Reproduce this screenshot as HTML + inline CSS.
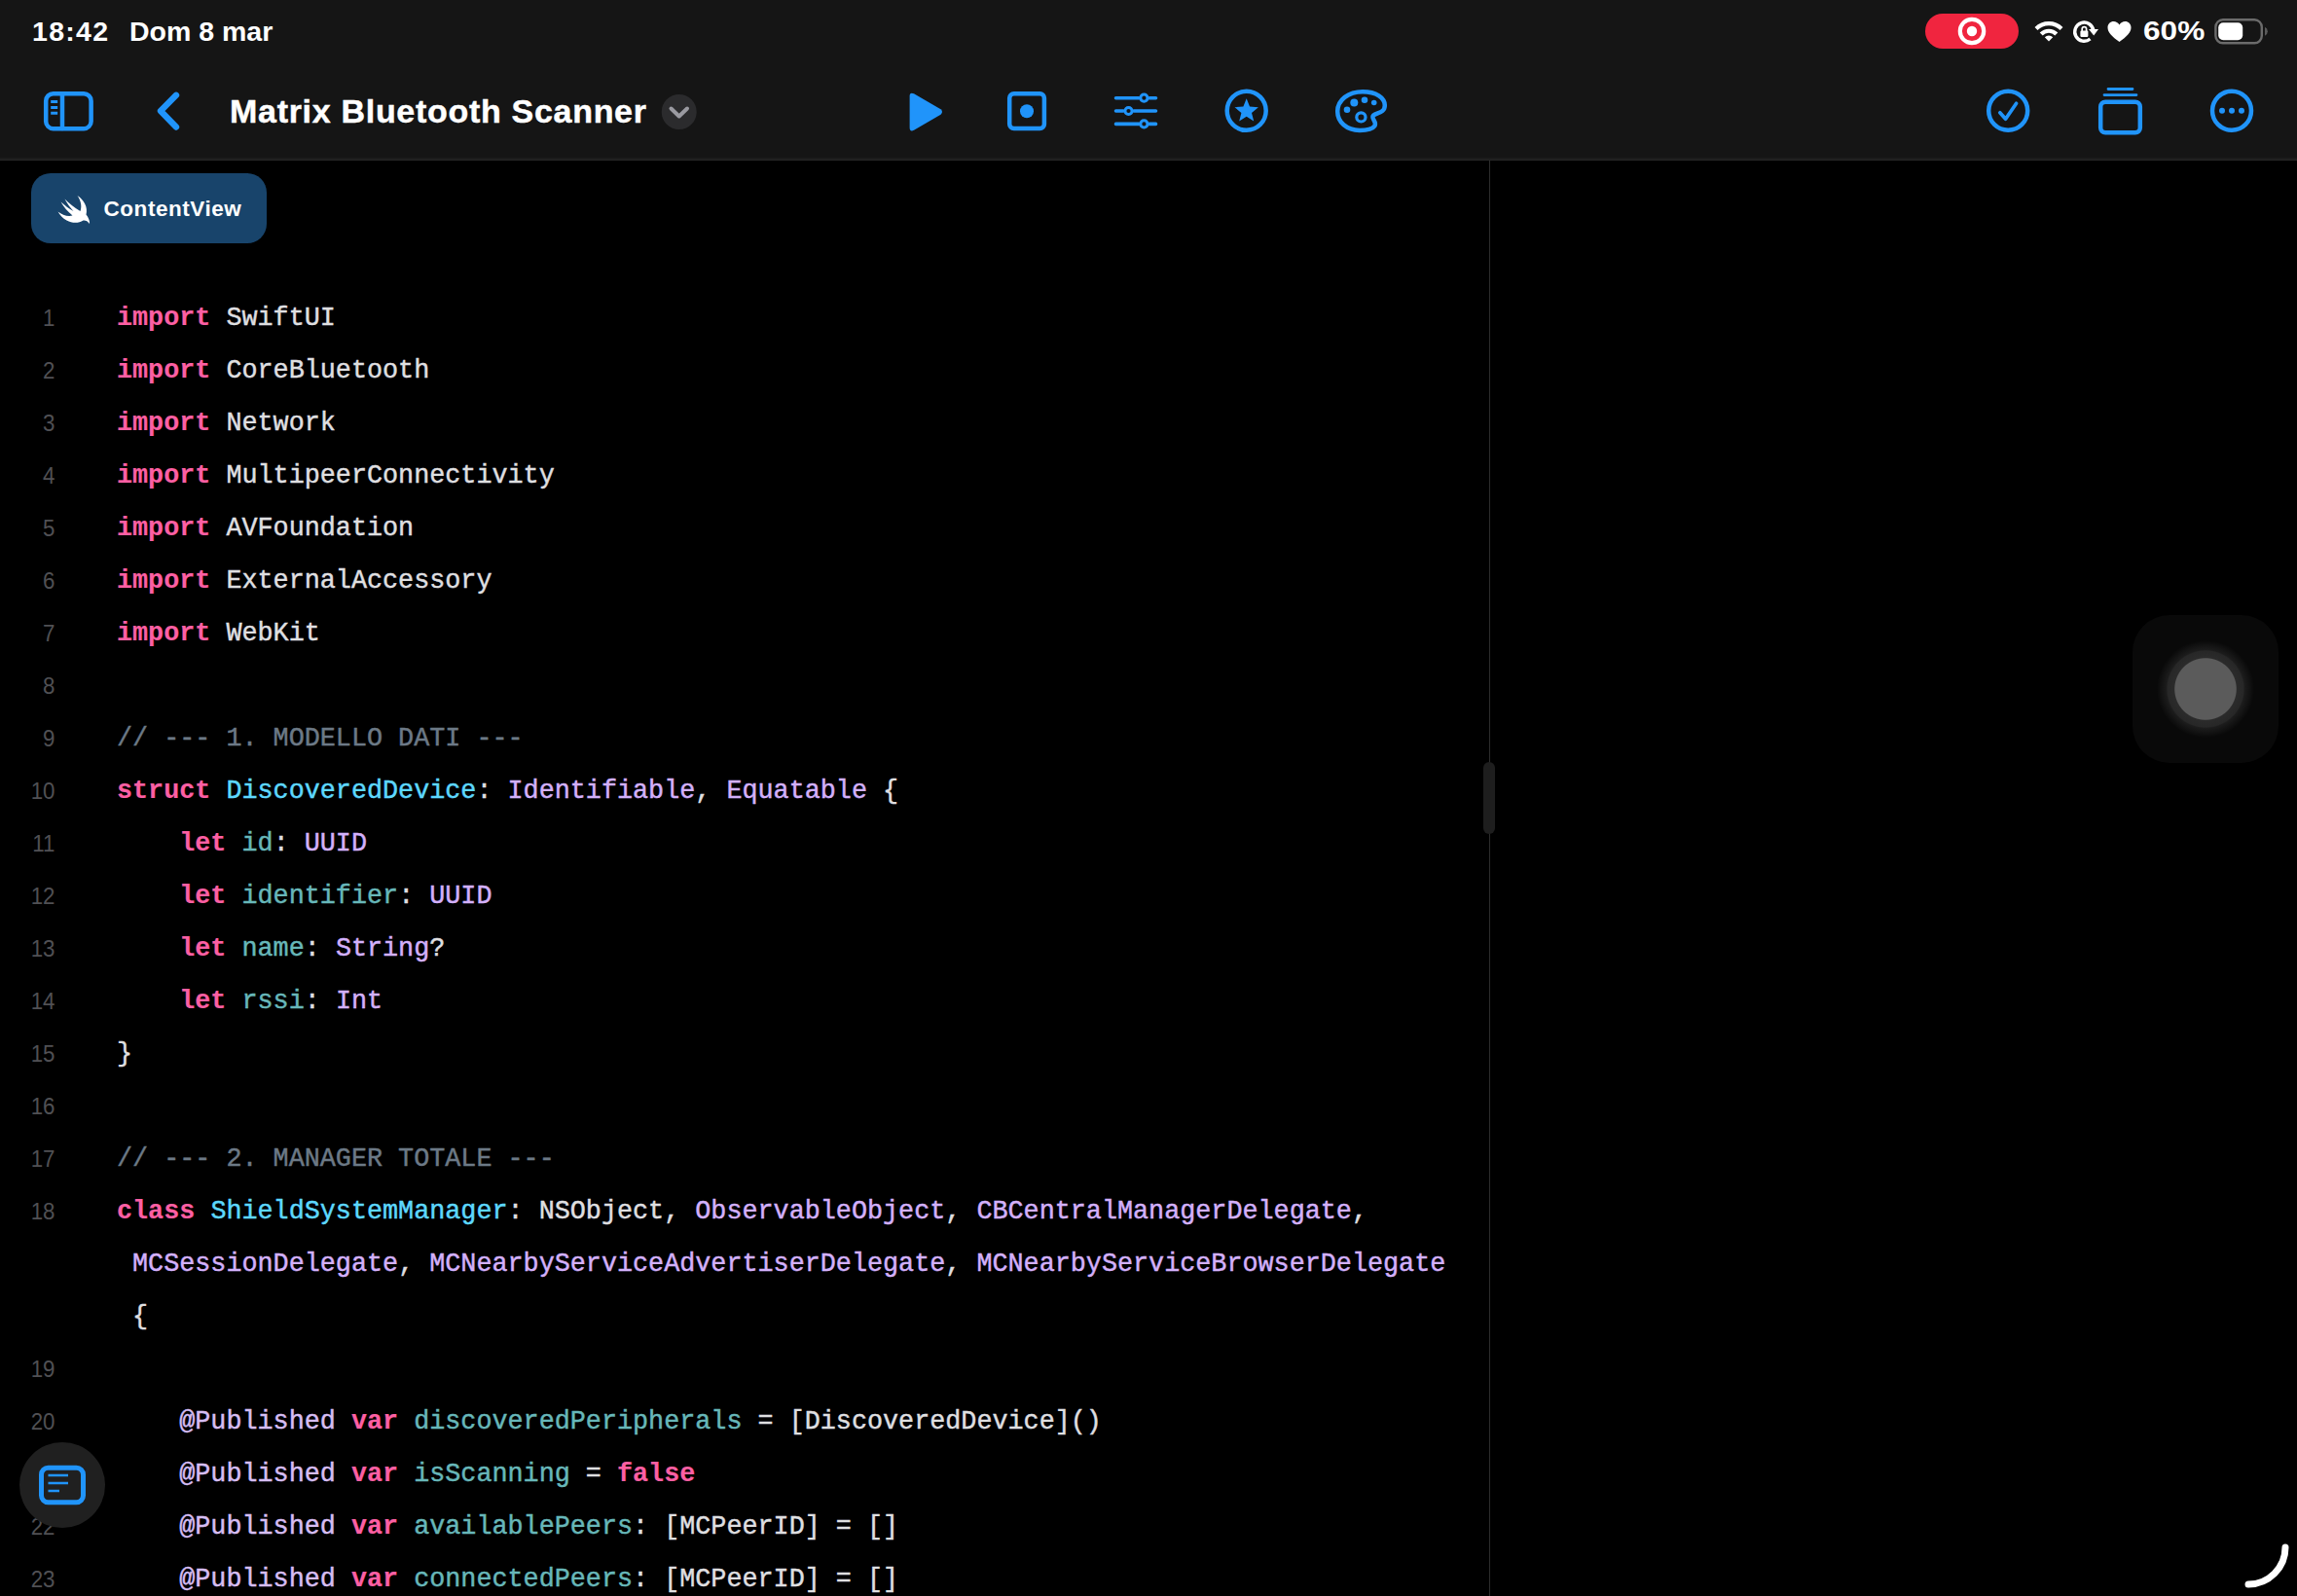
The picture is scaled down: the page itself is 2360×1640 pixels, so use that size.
<!DOCTYPE html>
<html lang="it">
<head>
<meta charset="utf-8">
<title>Matrix Bluetooth Scanner</title>
<style>
*{box-sizing:border-box;margin:0;padding:0}
html,body{width:2360px;height:1640px;overflow:hidden;background:#000}
body{position:relative;font-family:"Liberation Sans",sans-serif;color:#fff}
.abs{position:absolute}
#bar{left:0;top:0;width:2360px;height:165px;background:linear-gradient(#151515 0,#151515 162px,#1c1c1c 162px,#1c1c1c 164px,#272727 164px,#272727 165px)}
.st{position:absolute;font-weight:700;font-size:28.5px;line-height:32px;top:16px;color:#fff;white-space:nowrap}
#title{left:236px;top:92px;font-weight:700;font-size:34px;line-height:44px;letter-spacing:.7px;white-space:nowrap;-webkit-text-stroke:.45px #fff}
svg{position:absolute;overflow:visible}
.bl{stroke:#2094fa;fill:none;stroke-width:4.5;stroke-linecap:round;stroke-linejoin:round}
.bf{fill:#2094fa;stroke:none}
#tab{left:32px;top:178px;width:242px;height:72px;border-radius:20px;background:#18446b}
#tab span{position:absolute;left:74.500px;top:23px;font-weight:700;font-size:22.500px;line-height:28px;letter-spacing:.55px;white-space:nowrap}
#code{left:0;top:299.500px;width:1530px}
.ln{position:relative;height:54px;white-space:pre;font-family:"Liberation Mono",monospace;font-size:26.78px;line-height:54px;color:#dfdfe0;padding-left:120px;-webkit-text-stroke:.45px currentColor}
.ln i{position:absolute;left:0;top:.5px;width:56.500px;text-align:right;font-style:normal;font-family:"Liberation Sans",sans-serif;font-size:24.500px;color:#505054;line-height:54px;-webkit-text-stroke:0;transform:scaleX(.91);transform-origin:100% 50%}
.k{color:#fc5fa3;font-weight:700;-webkit-text-stroke:.15px currentColor}
.t{color:#5dd8ff}
.p{color:#d3b0fb}
.a{color:#d6bdf3}
.v{color:#67b7b9}
.c{color:#6c7986}
#div{left:1530px;top:165px;width:1px;height:1475px;background:#2c2c2c}
#grip{left:1524px;top:783px;width:12px;height:74px;border-radius:6px;background:#1e1e1e}
#fab{left:20px;top:1482px;width:88px;height:88px;border-radius:44px;background:#202020}
#at{left:2191px;top:632px;width:150px;height:152px;border-radius:38px;background:#090909}
#at b{position:absolute;border-radius:50%}
</style>
</head>
<body>
<div id="bar" class="abs"></div>
<div class="st" style="left:33px;letter-spacing:1.300px">18:42</div>
<div class="st" style="left:133px">Dom 8 mar</div>
<div class="st" style="left:2201.500px;font-size:27px;transform-origin:0 50%;transform:scaleX(1.17)">60%</div>
<div id="title" class="abs">Matrix Bluetooth Scanner</div>

<!-- status icons -->
<svg id="stat" width="2360" height="64" style="left:0;top:0">
<rect x="1978" y="14" width="96" height="36" rx="18" fill="#f0253f"/>
<circle cx="2026" cy="32" r="12.2" fill="none" stroke="#fff" stroke-width="4.2"/>
<circle cx="2026" cy="32" r="5.2" fill="#fff"/>
<!-- wifi -->
<g fill="none" stroke="#fff" stroke-width="4.2" stroke-linecap="butt">
<path d="M2092 29.5 A18.5 18.5 0 0 1 2118 29.5"/>
<path d="M2097.2 35 A11 11 0 0 1 2112.8 35"/>
</g>
<path d="M2105 42.5 L2100.8 38.2 A6 6 0 0 1 2109.2 38.2 Z" fill="#fff"/>
<!-- rotation lock -->
<path d="M2147.470 40.050 A9.600 9.600 0 1 1 2150.810 31.360" fill="none" stroke="#fff" stroke-width="3.400"/>
<path d="M2146 30 L2156 30 L2151.200 36.600 Z" fill="#fff"/>
<rect x="2137.400" y="31.600" width="8" height="6.400" rx="1.200" fill="#fff"/>
<path d="M2139.200 32 v-2.200 a2.200 2.200 0 0 1 4.400 0 v2.200" fill="none" stroke="#fff" stroke-width="1.700"/>
<!-- heart -->
<path d="M2177.5 43 C2170 37.5 2165.5 33.5 2165.5 28.2 C2165.5 24.6 2168.3 22 2171.6 22 C2174 22 2176.2 23.3 2177.5 25.4 C2178.800 23.3 2181 22 2183.4 22 C2186.7 22 2189.5 24.600 2189.5 28.2 C2189.5 33.5 2185 37.5 2177.5 43 Z" fill="#fff"/>
<!-- battery -->
<rect x="2276.400" y="20.300" width="47.400" height="24" rx="7.500" fill="none" stroke="#6b6b6b" stroke-width="2.400"/>
<rect x="2279.200" y="23.300" width="25" height="18" rx="5" fill="#fff"/>
<path d="M2327 27.800 a5 5 0 0 1 0 9 Z" fill="#5a5a5a"/>
</svg>

<!-- toolbar icons -->
<svg id="tools" width="2360" height="164" style="left:0;top:0">
<!-- sidebar -->
<rect class="bl" x="47.200" y="96.2" width="46.400" height="36" rx="7.5"/>
<path class="bl" d="M64 96.500 V132"/>
<path class="bl" style="stroke-width:3;stroke-linecap:butt" d="M52.200 104.600 H59.200 M52.200 110.500 H59.200 M52.200 116.200 H59.200"/>
<!-- back -->
<path class="bl" style="stroke-width:6.400" d="M181 97.800 L165 114 L181 130.500"/>
<!-- title chevron -->
<circle cx="697.700" cy="115" r="18" fill="#2b2b2d"/>
<path d="M689.500 111.500 L697.700 119.500 L706 111.500" fill="none" stroke="#9a9aa1" stroke-width="4" stroke-linecap="round" stroke-linejoin="round"/>
<!-- play -->
<path class="bf" d="M939 96.300 L966.500 112.300 Q969.500 115 966.500 117.700 L939 133.800 Q934.600 135.800 934.600 131 L934.600 99 Q934.600 94.300 939 96.300 Z"/>
<!-- record -->
<rect class="bl" x="1037.200" y="96.300" width="35.700" height="35.700" rx="4.500"/>
<circle class="bf" cx="1055" cy="114.200" r="7"/>
<!-- sliders -->
<path class="bl" style="stroke-width:3.600" d="M1146.500 100.700 H1170 M1181 100.700 H1187.500 M1146.500 114 H1154 M1165 114 H1187.500 M1146.500 127.400 H1170 M1181 127.400 H1187.500"/>
<circle class="bl" style="stroke-width:3" cx="1175.400" cy="100.700" r="3.600"/>
<circle class="bl" style="stroke-width:3" cx="1159.500" cy="114" r="3.600"/>
<circle class="bl" style="stroke-width:3" cx="1175.400" cy="127.400" r="3.600"/>
<!-- star -->
<circle class="bl" cx="1280.700" cy="113.800" r="20"/>
<path class="bf" d="M1280.700 101.300 L1284 109.600 L1292.900 110.200 L1286 115.900 L1288.200 124.500 L1280.700 119.800 L1273.200 124.500 L1275.400 115.900 L1268.500 110.200 L1277.400 109.600 Z"/>
<!-- palette -->
<path class="bl" d="M1400 94.200 C1414 94.200 1422.800 100.500 1422.800 108.300 C1422.800 116.300 1414.500 115.500 1411.200 118.500 C1407.800 121.600 1415.300 125 1412.300 129.600 C1409.500 133.700 1402 134 1397 134 C1383.500 133.600 1374.200 125.500 1374.200 114.500 C1374.200 102.500 1385.500 94.200 1400 94.200 Z"/>
<circle class="bf" cx="1384" cy="112.800" r="3.300"/>
<circle class="bf" cx="1391.300" cy="105.500" r="4"/>
<circle class="bf" cx="1402" cy="102.800" r="3.300"/>
<circle class="bf" cx="1411.700" cy="105.500" r="2.800"/>
<circle class="bl" style="stroke-width:3.200" cx="1398.400" cy="120.400" r="4.600"/>
<!-- check -->
<circle class="bl" cx="2063.200" cy="113.800" r="20"/>
<path class="bl" style="stroke-width:3.700" d="M2054.800 115.800 L2060.600 122.200 L2071.600 106.200"/>
<!-- stack -->
<rect class="bl" x="2158.200" y="104.700" width="40.600" height="31.600" rx="5"/>
<path class="bl" style="stroke-width:2.800" d="M2162 97.600 H2195 M2166 91.500 H2191"/>
<!-- more -->
<circle class="bl" cx="2293" cy="113.800" r="20"/>
<circle class="bf" cx="2283" cy="113.800" r="3"/>
<circle class="bf" cx="2293" cy="113.800" r="3"/>
<circle class="bf" cx="2303" cy="113.800" r="3"/>
</svg>

<!-- tab -->
<div id="tab" class="abs"><svg width="36" height="32" style="left:26.500px;top:21.500px" viewBox="0 0 36 32"><path fill="#fff" d="M20.500 1 C27.500 5.500 31.500 13 29.500 20.500 C31.500 23 33.500 26.500 33 30 C31 27 28.500 26 26.500 26.500 C22 29.500 15.500 29.800 9.500 26.500 C5.500 24.300 2.500 21 0.500 17.500 C5 20.800 10.500 23 15.500 21.500 C10.500 17.500 6.500 12.500 3.500 7.500 C7.500 11 12 14.500 16.500 17 C12.800 13 10 9 7.500 4.500 C12.500 9.500 17.500 13.500 23.500 17 C25.500 11.500 23.800 5.800 20.500 1 Z"/></svg><span>ContentView</span></div>

<div id="div" class="abs"></div>
<div id="grip" class="abs"></div>

<div id="code" class="abs">
<div class="ln"><i>1</i><span class="k">import</span> SwiftUI</div>
<div class="ln"><i>2</i><span class="k">import</span> CoreBluetooth</div>
<div class="ln"><i>3</i><span class="k">import</span> Network</div>
<div class="ln"><i>4</i><span class="k">import</span> MultipeerConnectivity</div>
<div class="ln"><i>5</i><span class="k">import</span> AVFoundation</div>
<div class="ln"><i>6</i><span class="k">import</span> ExternalAccessory</div>
<div class="ln"><i>7</i><span class="k">import</span> WebKit</div>
<div class="ln"><i>8</i></div>
<div class="ln"><i>9</i><span class="c">// --- 1. MODELLO DATI ---</span></div>
<div class="ln"><i>10</i><span class="k">struct</span> <span class="t">DiscoveredDevice</span>: <span class="p">Identifiable</span>, <span class="p">Equatable</span> {</div>
<div class="ln"><i>11</i>    <span class="k">let</span> <span class="v">id</span>: <span class="p">UUID</span></div>
<div class="ln"><i>12</i>    <span class="k">let</span> <span class="v">identifier</span>: <span class="p">UUID</span></div>
<div class="ln"><i>13</i>    <span class="k">let</span> <span class="v">name</span>: <span class="p">String</span>?</div>
<div class="ln"><i>14</i>    <span class="k">let</span> <span class="v">rssi</span>: <span class="p">Int</span></div>
<div class="ln"><i>15</i>}</div>
<div class="ln"><i>16</i></div>
<div class="ln"><i>17</i><span class="c">// --- 2. MANAGER TOTALE ---</span></div>
<div class="ln"><i>18</i><span class="k">class</span> <span class="t">ShieldSystemManager</span>: NSObject, <span class="p">ObservableObject</span>, <span class="p">CBCentralManagerDelegate</span>,</div>
<div class="ln"> <span class="p">MCSessionDelegate</span>, <span class="p">MCNearbyServiceAdvertiserDelegate</span>, <span class="p">MCNearbyServiceBrowserDelegate</span></div>
<div class="ln"> {</div>
<div class="ln"><i>19</i></div>
<div class="ln"><i>20</i>    <span class="a">@Published</span> <span class="k">var</span> <span class="v">discoveredPeripherals</span> = [DiscoveredDevice]()</div>
<div class="ln"><i>21</i>    <span class="a">@Published</span> <span class="k">var</span> <span class="v">isScanning</span> = <span class="k">false</span></div>
<div class="ln"><i>22</i>    <span class="a">@Published</span> <span class="k">var</span> <span class="v">availablePeers</span>: [MCPeerID] = []</div>
<div class="ln"><i>23</i>    <span class="a">@Published</span> <span class="k">var</span> <span class="v">connectedPeers</span>: [MCPeerID] = []</div>
</div>

<!-- floating doc button -->
<div id="fab" class="abs"><svg width="88" height="88" style="left:0;top:0"><rect x="22.500" y="26.200" width="43" height="35.500" rx="7" fill="none" stroke="#2094fa" stroke-width="5"/><path d="M29.500 34 H50 M29.500 42 H50 M29.500 50 H41" stroke="#2094fa" stroke-width="2.600" fill="none"/></svg></div>

<!-- assistive touch -->
<div id="at" class="abs"><b style="left:25px;top:25.500px;width:100px;height:100px;background:radial-gradient(circle closest-side,#5b5b5b 0,#5b5b5b 62.500%,#2b2b2b 64.500%,#272727 78%,#1c1c1c 80.500%,#131313 90%,#090909 100%)"></b></div>

<!-- corner arc -->
<svg width="60" height="60" style="left:2300px;top:1580px"><path d="M48 10 A38 38 0 0 1 10 48" fill="none" stroke="#fff" stroke-width="7" stroke-linecap="round"/></svg>
</body>
</html>
